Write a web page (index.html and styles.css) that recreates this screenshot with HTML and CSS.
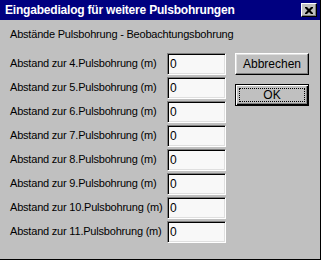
FILE: index.html
```html
<!DOCTYPE html>
<html lang="de">
<head>
  <meta charset="UTF-8">
  <title>Eingabedialog für weitere Pulsbohrungen</title>
  <link rel="stylesheet" href="styles.css">
</head>
<body>
  <div class="dialog">
    <div class="titlebar">
      <span class="title">Eingabedialog für weitere Pulsbohrungen</span>
      <span class="close-btn">
        <svg width="8" height="7" viewBox="0 0 8 7">
          <path d="M0 0h2l2 2 2-2h2v1l-2.5 2.5L8 6v1H6L4 5 2 7H0V6l2.5-2.5L0 1z" fill="#000"/>
        </svg>
      </span>
    </div>
    <div class="content">
      <div class="subtitle">Abstände Pulsbohrung - Beobachtungsbohrung</div>
      <div class="main">
        <div class="rows">
          <div class="row"><label>Abstand zur 4.Pulsbohrung (m)</label><div class="field">0</div></div>
          <div class="row"><label>Abstand zur 5.Pulsbohrung (m)</label><div class="field">0</div></div>
          <div class="row"><label>Abstand zur 6.Pulsbohrung (m)</label><div class="field">0</div></div>
          <div class="row"><label>Abstand zur 7.Pulsbohrung (m)</label><div class="field">0</div></div>
          <div class="row"><label>Abstand zur 8.Pulsbohrung (m)</label><div class="field">0</div></div>
          <div class="row"><label>Abstand zur 9.Pulsbohrung (m)</label><div class="field">0</div></div>
          <div class="row"><label>Abstand zur 10.Pulsbohrung (m)</label><div class="field">0</div></div>
          <div class="row"><label>Abstand zur 11.Pulsbohrung (m)</label><div class="field">0</div></div>
        </div>
        <div class="buttons">
          <div class="btn">Abbrechen</div>
          <div class="btn default"><span class="focus">OK</span></div>
        </div>
      </div>
    </div>
  </div>
</body>
</html>
```

FILE: styles.css
```css
body {
  margin: 0;
  font-family: "Liberation Sans", Arial, sans-serif;
  font-size: 11px;
  color: #000;
}

.dialog {
  width: 321px;
  height: 260px;
  box-sizing: border-box;
  background-color: #c0c0c0;
  border-bottom: 1px solid #000;
  border-right: 1px solid #000;
}

.titlebar {
  height: 20px;
  background-color: #000080;
  display: flex;
  align-items: center;
  justify-content: space-between;
  padding: 0 3px 0 5px;
}

.title {
  color: #fff;
  font-weight: bold;
  font-size: 12px;
  letter-spacing: -0.2px;
}

.close-btn {
  width: 16px;
  height: 14px;
  box-sizing: border-box;
  background-color: #c0c0c0;
  border-top: 1px solid #fff;
  border-left: 1px solid #fff;
  border-right: 1px solid #000;
  border-bottom: 1px solid #000;
  box-shadow: inset -1px -1px #808080;
  display: flex;
  align-items: center;
  justify-content: center;
}

.content {
  padding: 0 10px;
}

.subtitle {
  margin-top: 8px;
  line-height: 13px;
  letter-spacing: -0.2px;
}

.main {
  display: flex;
  margin-top: 12px;
}

.rows {
  display: flex;
  flex-direction: column;
  gap: 2px;
}

.row {
  display: flex;
  align-items: center;
  height: 22px;
}

.row label {
  width: 157px;
  flex-shrink: 0;
  white-space: nowrap;
  letter-spacing: -0.2px;
  padding-bottom: 3px;
}

.field {
  width: 59px;
  height: 22px;
  flex-shrink: 0;
  box-sizing: border-box;
  background-color: #f8f8f8;
  border-top: 1px solid #808080;
  border-left: 1px solid #808080;
  border-bottom: 1px solid #fff;
  border-right: 1px solid #fff;
  box-shadow: inset 1px 1px #000, inset -1px -1px #dfdfdf;
  padding: 3px 0 0 2px;
  font-size: 12px;
}

.buttons {
  display: flex;
  flex-direction: column;
  gap: 9px;
  margin-left: 9px;
}

.btn {
  width: 74px;
  height: 22px;
  box-sizing: border-box;
  border-top: 1px solid #fff;
  border-left: 1px solid #fff;
  border-right: 1px solid #000;
  border-bottom: 1px solid #000;
  box-shadow: inset -1px -1px #808080, inset 1px 1px #dfdfdf;
  display: flex;
  align-items: center;
  justify-content: center;
  font-size: 12px;
}

.btn.default {
  border: 1px solid #000;
  box-shadow: inset 1px 1px #fff, inset -1px -1px #000, inset -2px -2px #808080;
  padding: 3px;
}

.focus {
  flex: 1;
  align-self: stretch;
  border: 1px dotted #000;
  display: flex;
  align-items: center;
  justify-content: center;
}
```
